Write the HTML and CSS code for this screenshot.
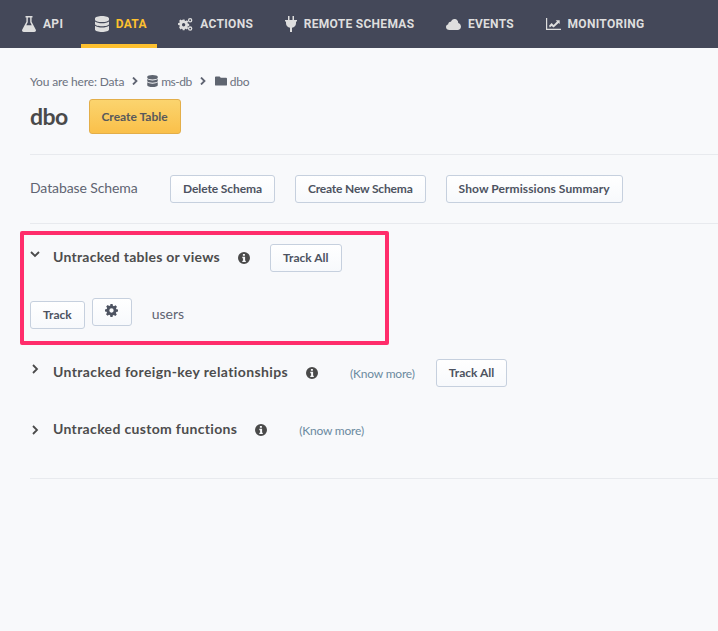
FILE: index.html
```html
<!DOCTYPE html>
<html>
<head>
<title>dbo</title>
<link rel="stylesheet" href="styles.css">
</head>
<body>
<svg class="defs" width="0" height="0">
  <symbol id="db" viewBox="0 0 14 16"><path d="M7 0C3.2 0 0 1 0 2.4v1.3C0 5.1 3.2 6 7 6s7-.9 7-2.3V2.4C14 1 10.800 0 7 0zM0 5.400v2.500C0 9.200 3.200 10.200 7 10.200s7-1 7-2.300V5.400C12.600 6.600 9.800 7.200 7 7.200S1.400 6.600 0 5.400zM0 9.700v3.800C0 14.900 3.200 16 7 16s7-1.100 7-2.500V9.700c-1.400 1.200-4.200 1.800-7 1.800S1.400 10.900 0 9.700z"/></symbol>
  <symbol id="info" viewBox="0 0 12 12"><path fill-rule="evenodd" d="M6 0a6 6 0 1 0 0 12A6 6 0 0 0 6 0zM4.900 1.900h2v1.800h-2zM4.300 4.800h2.800v3.900h.7v1.400H4.300V8.700h.8V6.200h-.8z"/></symbol>
  <symbol id="gear" viewBox="0 0 24 24"><path fill-rule="evenodd" d="M10 0h4l.6 3.200 2 .8 2.700-1.800 2.800 2.800-1.800 2.700.8 2L24 10v4l-3.200.6-.8 2 1.800 2.700-2.800 2.800-2.700-1.800-2 .8L14 24h-4l-.6-3.200-2-.8-2.700 1.800-2.800-2.800 1.800-2.700-.8-2L0 14v-4l3.200-.6.8-2-1.800-2.700 2.800-2.800 2.700 1.800 2-.8zM12 8a4 4 0 1 0 0 8 4 4 0 0 0 0-8z"/></symbol>
</svg>

<div class="topnav">
  <a class="navitem nav-api">
    <svg class="navicon" width="14" height="16" viewBox="0 0 14 16"><path d="M3.500 0h7v1.500H9.600v4.300L13.700 13.600C14.400 14.900 13.600 16 12.300 16H1.700C.4 16 -.4 14.900.3 13.600L4.400 5.800V1.500H3.500zM5.800 1.500v4.700L4.300 9.200h5.400L8.200 6.200V1.500z" fill-rule="evenodd"/></svg>
    API
  </a>
  <a class="navitem nav-data active">
    <svg class="navicon" width="14" height="16"><use href="#db"/></svg>
    DATA
  </a>
  <a class="navitem nav-actions">
    <svg class="navicon" width="15" height="13" viewBox="0 0 16 14"><path fill-rule="evenodd" d="M4 3h2l.3 1.400.9.400L8.500 4l1.400 1.400-.8 1.200.4.900 1.500.5v2l-1.500.3-.4.900.8 1.200L8.500 13.800l-1.300-.8-.9.400L6 14.800H4l-.3-1.400-.9-.4-1.300.8L.1 11.400l.8-1.200-.4-.9L-1 9V7l1.500-.3.400-.9-.8-1.200L1.500 3.200l1.300.8.900-.4zM5 7a1.800 1.800 0 1 0 0 3.600A1.800 1.800 0 0 0 5 7z" transform="translate(1 -1.500)"/><path fill-rule="evenodd" d="M13 0a2.400 2.400 0 1 0 0 4.800A2.400 2.400 0 0 0 13 0zm0 1.400a1 1 0 1 1 0 2 1 1 0 0 1 0-2zM13 9a2.400 2.400 0 1 0 0 4.800A2.400 2.400 0 0 0 13 9zm0 1.400a1 1 0 1 1 0 2 1 1 0 0 1 0-2z"/></svg>
    ACTIONS
  </a>
  <a class="navitem nav-remote">
    <svg class="navicon" width="12" height="16" viewBox="0 0 12 16"><path d="M3 0h1.500v4H7.500V0H9v4h3v1.500H11v1.800C11 9.800 9.300 11.500 7 11.800V16H5v-4.200C2.700 11.500 1 9.800 1 7.300V5.500H0V4h3z"/></svg>
    REMOTE SCHEMAS
  </a>
  <a class="navitem nav-events">
    <svg class="navicon" width="15" height="11" viewBox="0 0 15 11"><path d="M3.400 11C1.500 11 0 9.700 0 8c0-1.300.9-2.400 2.200-2.800C2.300 3.400 3.500 2.500 4.900 2.800 5.600 1.100 7-.1 8.800 0c2.100.1 3.500 1.800 3.400 4C13.800 4.500 15 5.900 15 7.600 15 9.600 13.500 11 11.600 11z"/></svg>
    EVENTS
  </a>
  <a class="navitem nav-monitor">
    <svg class="navicon" width="15" height="12" viewBox="0 0 15 12"><path d="M0 0h1.200v10.700H15V12H0z"/><path d="M3 7.800l2.600-2.700 2 1.800L11 3.400 9.700 2.200h4v3.900l-1.100-1.200-5 4.700-2-1.700-1.800 1.700z"/></svg>
    MONITORING
  </a>
</div>

<div class="page">
  <div class="crumbs">
    <span class="crumbtext">You are here: Data</span>
    <svg class="crumb-sep" width="6" height="8" viewBox="0 0 6 8"><path d="M1 .5L4.500 4 1 7.500" fill="none" stroke-width="1.800"/></svg>
    <svg class="crumb-icon" width="11" height="12"><use href="#db"/></svg>
    <span class="crumbtext crumb-db">ms-db</span>
    <svg class="crumb-sep" width="6" height="8" viewBox="0 0 6 8"><path d="M1 .5L4.500 4 1 7.500" fill="none" stroke-width="1.800"/></svg>
    <svg class="crumb-icon" width="12" height="10" viewBox="0 0 13 10"><path d="M1 0h4l1.200 1.500H12a1 1 0 0 1 1 1V9a1 1 0 0 1-1 1H1a1 1 0 0 1-1-1V1a1 1 0 0 1 1-1z"/></svg>
    <span class="crumbtext">dbo</span>
  </div>

  <div class="titlerow">
    <h2>dbo</h2>
    <button class="btn btn-yellow">Create Table</button>
  </div>

  <hr>

  <div class="schemarow">
    <span class="schemalabel">Database Schema</span>
    <button class="btn btn-delete">Delete Schema</button>
    <button class="btn btn-new">Create New Schema</button>
    <button class="btn btn-perm">Show Permissions Summary</button>
  </div>

  <hr>

  <div class="highlight">
    <div class="sectionhead sec-tables">
      <svg class="chev chev-open" width="10" height="7" viewBox="0 0 10 7"><path d="M1 1l4 4 4-4" fill="none"/></svg>
      <h4>Untracked tables or views</h4>
      <svg class="info" width="12" height="12"><use href="#info"/></svg>
      <button class="btn btn-trackall">Track All</button>
    </div>
    <div class="tablerow">
      <button class="btn">Track</button>
      <button class="btn btn-gear"><svg width="13" height="13"><use href="#gear"/></svg></button>
      <span class="tablename">users</span>
    </div>
  </div>

  <div class="sectionhead sec-fk">
    <svg class="chev chev-up" width="7" height="10" viewBox="0 0 7 10"><path d="M1 1l4 4-4 4" fill="none"/></svg>
    <h4>Untracked foreign-key relationships</h4>
    <svg class="info" width="12" height="12"><use href="#info"/></svg>
    <a class="knowmore">(Know more)</a>
    <button class="btn">Track All</button>
  </div>

  <div class="sectionhead sec-fn">
    <svg class="chev" width="7" height="10" viewBox="0 0 7 10"><path d="M1 1l4 4-4 4" fill="none"/></svg>
    <h4>Untracked custom functions</h4>
    <svg class="info" width="12" height="12"><use href="#info"/></svg>
    <a class="knowmore">(Know more)</a>
  </div>

  <hr class="lasthr">
</div>
</body>
</html>
```
FILE: styles.css
```css
html, body { margin: 0; padding: 0; height: 100%; overflow: hidden; }
body { background: #f8f9fb; color: #4d4d4d; font-family: Lato, "Open Sans", sans-serif; font-size: 13px; }
.defs { position: absolute; }

.topnav { display: flex; height: 48px; background: #444859; box-sizing: border-box; padding-left: 8px; }
.navitem { display: flex; align-items: center; box-sizing: border-box; height: 48px; color: #dedede; fill: #dedede; padding: 0 10px 0 14px; margin-right: 7.5px; font-family: Roboto, sans-serif; font-weight: 700; font-size: 12px; letter-spacing: .3px; }
.navicon { margin-right: 7px; flex: none; }
.navitem.active { color: #fdc02f; border-bottom: 4px solid #fdc02f; padding-top: 4px; }
.navitem.active .navicon { fill: #dedede; }

.page { padding: 26px 0 0 30px; }

.crumbs { display: flex; align-items: center; height: 14px; font-size: 12px; color: #6c7280; }
.crumbtext { letter-spacing: -.15px; }
.crumb-db { letter-spacing: -.5px; }
.crumb-sep { stroke: #5f6472; margin: 0 9px 0 8px; }
.crumb-icon { fill: #5f6570; margin-right: 3px; }

.titlerow { display: flex; align-items: center; margin-top: 11px; }
h2 { margin: 0 21px 2px 0; font-size: 23px; letter-spacing: -.6px; font-weight: 700; color: #4a4a4a; line-height: 32px; }

hr { border: 0; border-top: 1px solid #e8eaee; margin: 0; }
.titlerow + hr { margin-top: 20px; }
.lasthr { margin-top: 34px; }

.btn { font-family: Lato, sans-serif; font-size: 12px; font-weight: 700; color: #4d5361; background: linear-gradient(#fff, #f7f9fc); border: 1px solid #c6d0de; border-radius: 3px; height: 28px; padding: 0 12px 2px; }
.btn-yellow { height: 35px; width: 92px; padding: 0; color: #58595b; background: linear-gradient(#fbd46e, #fac04a); border-color: #e3ae49; }
.btn-delete { letter-spacing: -.1px; }
.btn-new { letter-spacing: -.18px; }
.btn-perm { letter-spacing: .08px; }

.schemarow { display: flex; align-items: center; gap: 20px; margin: 20px 0 20px; }
.schemalabel { font-size: 14px; letter-spacing: -.1px; color: #5f6472; width: 120px; margin-bottom: 3px; }

.highlight { box-sizing: border-box; width: 369px; height: 114px; margin: 7px 0 0 -10px; border: 4px solid #ff2d6b; border-radius: 2px; padding: 9px 0 0 6px; }

.sectionhead { display: flex; align-items: center; height: 28px; }
.sec-fk { margin-top: 14px; }
.sec-fn { margin-top: 29px; }
.chev { stroke: #4a4a4a; stroke-width: 1.800; margin: 0 14px 0 2px; flex: none; }
.chev-open { margin: 0 13px 8px 0; }
.chev-up { margin-bottom: 9px; }
h4 { margin: 0 0 4px; font-size: 14px; font-weight: 700; color: #4d4d4d; letter-spacing: .33px; }
.sec-tables h4 { letter-spacing: .26px; }
.sec-fk h4 { letter-spacing: .38px; }
.info { fill: #4a4a4a; margin-left: 18px; flex: none; }
.btn-trackall { margin-left: 20px; }
.knowmore { font-size: 12px; letter-spacing: -.2px; color: #6b8aa0; margin: 0 21px 0 32px; }

.tablerow { display: flex; align-items: center; margin-top: 29px; }
.tablerow .btn { margin-right: 7px; }
.btn-gear { width: 40px; padding: 0; position: relative; top: -3px; fill: #4d5361; }
.tablename { font-size: 14px; color: #5f6472; margin: 0 0 3px 13px; }
```
